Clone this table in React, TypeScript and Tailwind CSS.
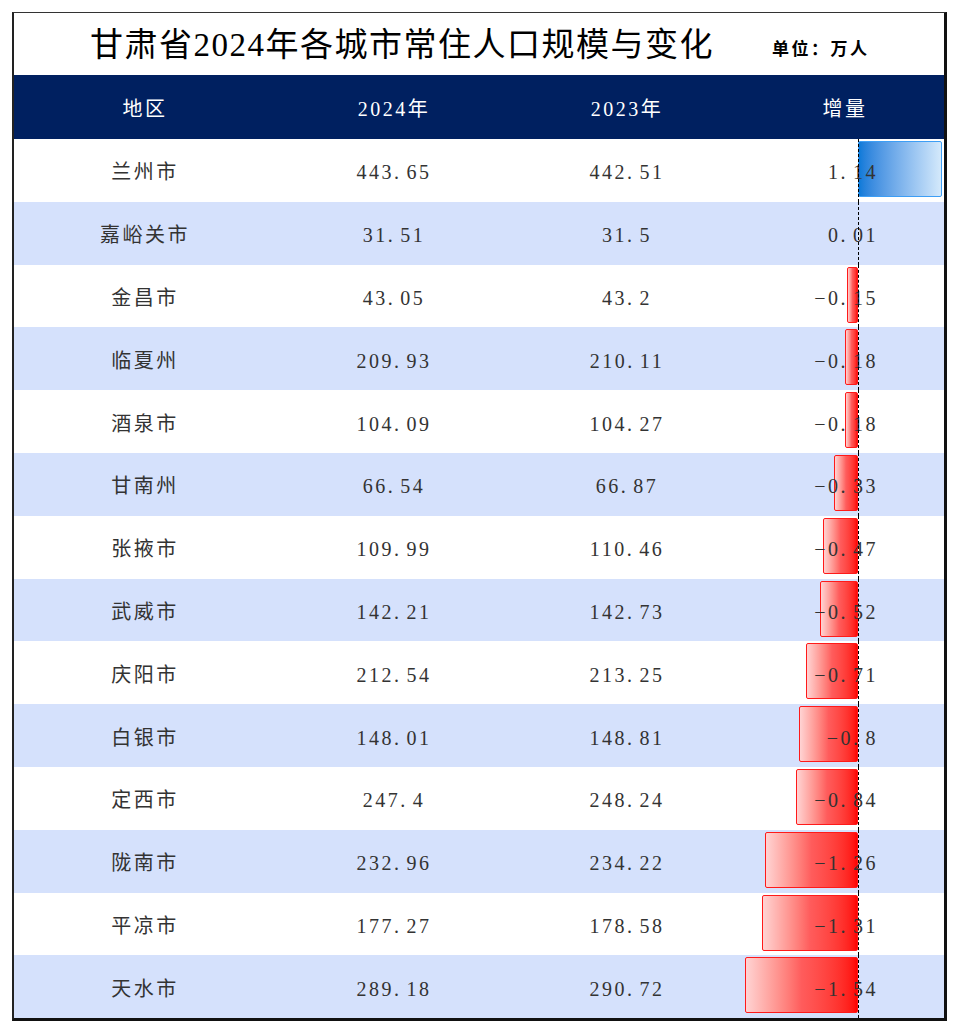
const rows: [string, string, string, number][] = [
  ["兰州市", "443.65", "442.51", 1.14],
  ["嘉峪关市", "31.51", "31.5", 0.01],
  ["金昌市", "43.05", "43.2", -0.15],
  ["临夏州", "209.93", "210.11", -0.18],
  ["酒泉市", "104.09", "104.27", -0.18],
  ["甘南州", "66.54", "66.87", -0.33],
  ["张掖市", "109.99", "110.46", -0.47],
  ["武威市", "142.21", "142.73", -0.52],
  ["庆阳市", "212.54", "213.25", -0.71],
  ["白银市", "148.01", "148.81", -0.8],
  ["定西市", "247.4", "248.24", -0.84],
  ["陇南市", "232.96", "234.22", -1.26],
  ["平凉市", "177.27", "178.58", -1.31],
  ["天水市", "289.18", "290.72", -1.54],
];

const font = "font-['Liberation_Serif','Noto_Sans_CJK_SC',serif]";
const scale = 73.5; // px per 万人

// SimSun-ish numbers: half-width period
function Num({ v }: { v: string }) {
  return (
    <>
      {v.split("").map((c, i) =>
        c === "." ? (
          <span key={i} className="inline-block w-[12.5px] text-left">
            .
          </span>
        ) : (
          <span key={i}>{c === "-" ? "−" : c}</span>
        )
      )}
    </>
  );
}

function Delta({ d }: { d: number }) {
  const w = Math.abs(d) * scale;
  return (
    <div className="relative h-full w-[202px]">
      {d < 0 && (
        <div
          className="absolute top-[2px] h-[56px] rounded-[2px] border border-[#ff1a1a] bg-gradient-to-r from-[#ffd3d3] via-[#ff5c5c] to-[#ff0000]"
          style={{ left: 116 - w, width: w }}
        />
      )}
      {d > 0 && w > 2 && (
        <div
          className="absolute top-[2px] left-[116px] h-[56px] rounded-[2px] border border-[#3d9ef5] bg-gradient-to-r from-[#0a7ad9] to-[#d4e9fb]"
          style={{ width: w }}
        />
      )}
      <div className="relative flex h-full items-center justify-end pt-[4px] pr-[66px]">
        <Num v={String(d)} />
      </div>
      <div className="absolute top-0 bottom-0 left-[116px] border-l border-dashed border-black" />
    </div>
  );
}

export default function App() {
  return (
    <div className={`h-[1034px] w-[960px] bg-white pt-[12px] pl-[12px] ${font}`}>
      <div className="w-[935px] border-t border-l-2 border-r-[3px] border-b-[3px] border-t-[#333] border-l-[#222] border-r-[#111] border-b-[#111]">
        {/* title */}
        <div className="flex h-[62px] items-center pt-[4px] pl-[76px] text-black">
          <div className="text-[33px] tracking-[1.5px]">甘肃省2024年各城市常住人口规模与变化</div>
          <div className="mt-[8px] ml-[58px] text-[17px] font-bold tracking-[2.5px]">单位：万人</div>
        </div>

        {/* header */}
        <div className="flex h-[64px] items-center bg-[#002060] pt-[4px] text-[20px] tracking-[2.5px] text-white">
          <div className="w-[262px] text-center">地区</div>
          <div className="w-[236px] text-center">2024年</div>
          <div className="w-[230px] text-center">2023年</div>
          <div className="w-[202px] pl-[4px] text-center">增量</div>
        </div>

        {rows.map(([city, a, b, d], i) => (
          <div
            key={city}
            className={`flex h-[62.8px] items-center text-[20px] tracking-[2.5px] text-[#333] ${
              i % 2 === 1 ? "bg-[#d5e1fc]" : "bg-white"
            }`}
          >
            <div className="w-[262px] pt-[4px] text-center">{city}</div>
            <div className="w-[236px] pt-[4px] text-center">
              <Num v={a} />
            </div>
            <div className="w-[230px] pt-[4px] text-center">
              <Num v={b} />
            </div>
            <Delta d={d} />
          </div>
        ))}
      </div>
    </div>
  );
}
